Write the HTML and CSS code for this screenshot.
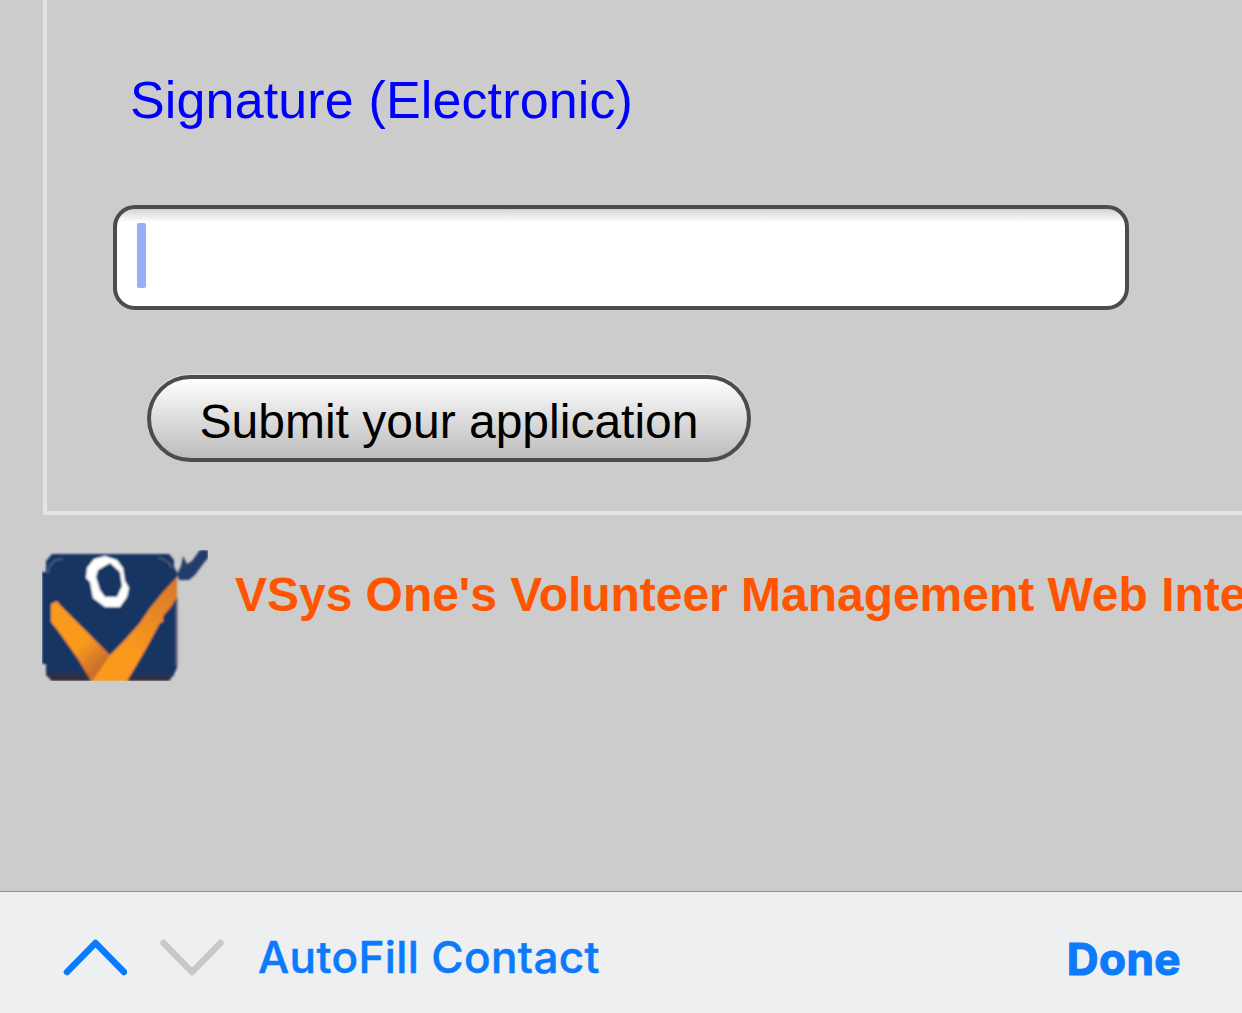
FILE: index.html
```html
<!DOCTYPE html>
<html lang="en">
<head>
<meta charset="utf-8">
<title>Volunteer application</title>
<link rel="stylesheet" href="styles.css">
</head>
<body>
<main class="page">
  <form class="panel">
    <label class="signature-label" for="signature">Signature (Electronic)</label>
    <div class="field">
      <span class="caret"></span>
      <input class="field-input" id="signature" type="text">
    </div>
    <button class="submit" type="button">Submit your application</button>
  </form>
  <footer class="brand">
    <svg class="logo" viewBox="0 0 168 134" aria-hidden="true">
      <defs>
        <linearGradient id="left-arm" x1="25" y1="75" x2="62" y2="112" gradientUnits="userSpaceOnUse">
          <stop offset=".45" stop-color="#fa9a1c"/><stop offset="1" stop-color="#c9702d"/>
        </linearGradient>
        <linearGradient id="right-arm" x1="130" y1="35" x2="75" y2="130" gradientUnits="userSpaceOnUse">
          <stop offset="0" stop-color="#d97a2b"/><stop offset=".7" stop-color="#fb991a"/>
        </linearGradient>
        <filter id="soften" x="0" y="0" width="1" height="1"><feGaussianBlur stdDeviation=".8"/></filter>
      </defs>
      <g filter="url(#soften)">
        <path d="M0 22H4V11L10 4H127L132 10V17L135 22V118L132 124L127 131H10L4 125V114H0Z" fill="#193564"/>
        <path d="M5 123L10 131H127L132 123V126Z" fill="#302d3f"/>
        <path d="M134.500 47V116" stroke="#625f79" stroke-width="2"/>
        <path d="M6 24Q7 9 21 9M116 8Q126 9 130 18" fill="none" stroke="#53617f" stroke-width="1.5"/>
        <path d="M9 54L15 51L19 56L68 105L62 131H49L36 109L17 82L9 72Z" fill="url(#left-arm)"/>
        <path d="M135 27V47L129 57L121 66L121 72L118 73L105 97L94 116L85 131H50L58 120L68 105L80 93L97 74L108 58L121 42Z" fill="url(#right-arm)"/>
        <path fill-rule="evenodd" d="M52 9L63 6L75 10L81 18L83 31L87 38L85 47L78 57H63L51 48L48 32L44 28L45 18ZM68 13L56 20L54 27L58 40L63 47L75 47L80 36L78 22Z" fill="#fff"/>
        <path d="M135 24L139 16L141 6L145 14L150 11L158 0H166V8L161 14L153 25L147 30H137Z" fill="#203c69"/>
      </g>
    </svg>
    <span class="brand-name">VSys One's Volunteer Management Web Inte</span>
  </footer>
</main>
<nav class="toolbar">
  <svg class="arrow arrow-up" viewBox="0 0 64 38" aria-hidden="true"><path d="M4 34L32.500 5L61 34"/></svg>
  <svg class="arrow arrow-down" viewBox="0 0 64 38" aria-hidden="true"><path d="M3.500 5L32 34L60.500 5"/></svg>
  <span class="autofill">AutoFill Contact</span>
  <span class="done">Done</span>
</nav>
</body>
</html>
```
FILE: styles.css
```css
* { box-sizing: border-box; }
body {
  margin: 0;
  width: 1242px;
  height: 1013px;
  overflow: hidden;
  display: flex;
  flex-direction: column;
  background: #ccc;
  font-family: "Liberation Sans", Arial, sans-serif;
}
.page { height: 891px; flex: none; }
.panel {
  height: 515px;
  margin-left: 43px;
  padding: 70px 0 0 66px;
  border: solid #e4e4e4;
  border-width: 0 0 4px 4px;
  display: flex;
  flex-direction: column;
  align-items: flex-start;
}
.signature-label {
  height: 60px;
  margin-left: 17px;
  color: #00f;
  font-size: 52px;
  line-height: 60px;
  letter-spacing: .14px;
  white-space: nowrap;
}
.field {
  width: 1016px;
  height: 105px;
  margin-top: 75px;
  padding: 14px 20px;
  display: flex;
  border: 4.500px solid #4c4c4c;
  border-radius: 22px;
  background: linear-gradient(#d2d2d2, #fff 13px);
}
.caret {
  width: 9px;
  height: 65px;
  border-radius: 2px;
  background: #9badf5;
}
.field-input {
  flex: 1;
  min-width: 0;
  padding: 0;
  border: 0;
  outline: 0;
  background: transparent;
  font: 48px "Liberation Sans", Arial, sans-serif;
}
.submit {
  width: 604px;
  height: 87px;
  margin: 65px 0 0 34px;
  padding: 5px 0 0;
  border: 4.500px solid #4c4c4c;
  border-radius: 44px;
  background: linear-gradient(#fff, #ddd 50%, #bcbcbc);
  box-shadow: 0 -1px 1px #e4e4e4;
  color: #000;
  font: 48px "Liberation Sans", Arial, sans-serif;
  white-space: nowrap;
}
.brand {
  display: flex;
  padding: 35px 0 0 42px;
}
.logo { width: 168px; height: 134px; flex: none; }
.brand-name {
  margin: 17px 0 0 25px;
  color: #ff5500;
  font-size: 48px;
  font-weight: bold;
  line-height: 56px;
  letter-spacing: -.03px;
  white-space: nowrap;
}
.toolbar {
  flex: 1;
  display: flex;
  align-items: center;
  padding: 9px 61px 0 63px;
  border-top: 1px solid #8e8f91;
  background: #eeeff1;
  color: #0b7bfb;
  font-family: Inter, sans-serif;
}
.arrow {
  width: 64px;
  height: 38px;
  fill: none;
  stroke: #0b7bfb;
  stroke-width: 6.5;
  stroke-linecap: round;
  stroke-linejoin: round;
}
.arrow-down { margin-left: 33px; stroke: #c8c8cb; }
.autofill {
  margin-left: 34px;
  font-size: 44px;
  font-weight: 500;
  letter-spacing: .4px;
  -webkit-text-stroke: .5px;
  white-space: nowrap;
}
.done {
  margin: 4px 0 0 auto;
  font-size: 44px;
  font-weight: 700;
  letter-spacing: .5px;
  -webkit-text-stroke: 1.200px;
}
```
